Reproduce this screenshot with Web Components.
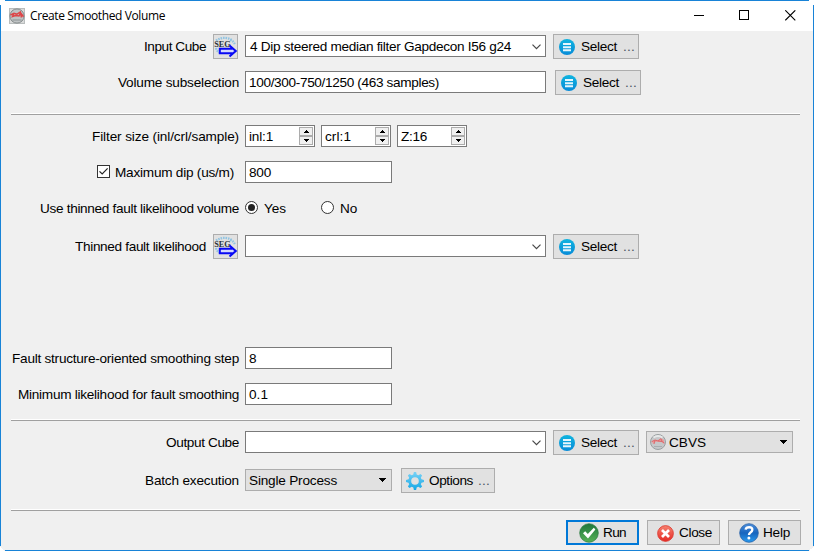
<!DOCTYPE html>
<html lang="en"><head><meta charset="utf-8"><title>Create Smoothed Volume</title>
<style>
html,body{margin:0;background:#fff}
body{width:814px;height:551px;overflow:hidden;font:13.6px/25px "Liberation Sans",Arial,sans-serif;color:#000}
</style></head><body>
<dialog-window></dialog-window>
<script>
const define=(name,html,setup)=>customElements.define(name,class extends HTMLElement{
  connectedCallback(){
    if(this.shadowRoot)return;
    const t=document.createElement('template');
    t.innerHTML=typeof html==='function'?html(this):html;
    this.attachShadow({mode:'open'}).append(t.content.cloneNode(true));
    if(setup)setup(this);
  }
});
/* Text tracked evenly to the width given in w. */
const ctx=document.createElement('canvas').getContext('2d');
define('fit-text','<style>:host{display:block;white-space:pre;flex:none}:host([dots]){color:#4a5560}</style><slot></slot>',el=>{
  const s=getComputedStyle(el),txt=el.textContent,w=+el.getAttribute('w');
  ctx.font=s.fontSize+' '+s.fontFamily;
  if(w){el.style.width=w+'px';el.style.letterSpacing=((w-ctx.measureText(txt).width)/txt.length).toFixed(3)+'px';}
});
const glyphs={
list:`<svg width="16" height="16" viewBox="0 0 16 16"><defs><linearGradient id="g" x2="0" y2="1"><stop stop-color="#10b4df"/><stop offset="1" stop-color="#078bd8"/></linearGradient></defs><circle cx="8" cy="8" r="8" fill="url(#g)"/><path d="M4 4h8v2H4zM4 7.2h8v2H4zM4 10.3h8v2H4z" fill="#e5f6fd"/></svg>`,
seg:`<svg width="25" height="25" viewBox="0 0 25 25"><g fill="none" stroke="#8fc4e2" stroke-width="2.2" stroke-dasharray="1.6 .9"><path d="M3 6.5Q11 1.5 19 6"/><path d="M3 14Q4 18 7 18.5M17 6Q21 7 22 11"/></g><text x="1.2" y="13" font-family="Liberation Serif,serif" font-size="9" font-weight="bold" fill="#2c3238" textLength="16.5" lengthAdjust="spacingAndGlyphs">SEG</text><path d="M6.8 14.8H16.5V11.2L23 17L16.5 22.8V19.2H6.8Z" fill="#d4d8ff"/><path d="M16.5 11.4L22.8 17L16.5 22.6M19.5 14.8H6.8V19.2H19.5" fill="none" stroke="#0808f5" stroke-width="2"/></svg>`,
gear:`<svg width="18" height="18" viewBox="0 0 18 18"><defs><linearGradient id="g" gradientUnits="userSpaceOnUse" x1="0" y1="0" x2="0" y2="18"><stop stop-color="#7ad2f6"/><stop offset="1" stop-color="#12a7e6"/></linearGradient></defs><path fill="url(#g)" fill-rule="evenodd" d="M7.9 0h2.2l.6 2.5 1.6.7 2.2-1.3 1.6 1.6-1.3 2.2.7 1.6 2.5.6v2.2l-2.5.6-.7 1.6 1.3 2.2-1.6 1.6-2.2-1.3-1.6.7-.6 2.5H7.9l-.6-2.5-1.6-.7-2.2 1.3-1.6-1.6 1.3-2.2-.7-1.6L0 10.1V7.9l2.5-.6.7-1.6-1.3-2.2 1.6-1.6 2.2 1.3 1.6-.7zM9 5.2a3.8 3.8 0 1 0 0 7.6a3.8 3.8 0 0 0 0-7.6z"/></svg>`,
ok:`<svg width="20" height="20" viewBox="0 0 20 20"><defs><linearGradient id="g" x2="0" y2="1"><stop stop-color="#1e763b"/><stop offset="1" stop-color="#58b257"/></linearGradient></defs><circle cx="10" cy="10" r="9.3" fill="url(#g)" stroke="#2c7b43" stroke-width=".7"/><path d="M4 10.2L6.2 8.3L8.8 11L14.8 4.7L16.4 6.5L9 15.4Z" fill="#fff"/></svg>`,
no:`<svg width="17" height="17" viewBox="0 0 17 17"><defs><linearGradient id="g" x2="0" y2="1"><stop stop-color="#f6816f"/><stop offset="1" stop-color="#e52b25"/></linearGradient></defs><circle cx="8.5" cy="8.5" r="7.9" fill="url(#g)" stroke="#da3b32" stroke-width=".8"/><path d="M5 5L12 12M12 5L5 12" stroke="#fff" stroke-width="2.7"/></svg>`,
help:`<svg width="20" height="20" viewBox="0 0 20 20"><defs><linearGradient id="g" x2="0" y2="1"><stop stop-color="#4c8edc"/><stop offset=".5" stop-color="#1765be"/><stop offset="1" stop-color="#2a9cf0"/></linearGradient></defs><circle cx="10" cy="10" r="9.3" fill="url(#g)" stroke="#2a62a7" stroke-width=".8"/><path d="M6.6 6.6Q7 4.2 10.2 4.2Q13.5 4.2 13.3 7Q13.2 8.4 11.2 9.7Q10 10.5 10 12" fill="none" stroke="#fff" stroke-width="2.4"/><circle cx="9.9" cy="15" r="1.5" fill="#fff"/></svg>`,
cube:`<svg width="16" height="16" viewBox="0 0 16 16"><circle cx="8" cy="8" r="7.5" fill="#c5c8ca" stroke="#9a9fa1"/><path d="M3.5 3.5Q8 .5 12.5 3.5" stroke="#e7e9e9" stroke-width="2" fill="none"/><path d="M2 7Q5 5 8 6Q11 3 14 6V10Q11 7 9 8Q5 7 3 10Z" fill="#e89c9c"/><path d="M1.5 7.8L5 6L8 7L11 4.6L12 7.5L14.5 9M5 6L4 10M8 7L12 7.5" stroke="#dc6b6e" stroke-width="1" fill="none"/><path d="M4 12.5h8" stroke="#a9aeb0"/></svg>`,
app:`<svg width="16" height="16" viewBox="0 0 16 16"><rect x=".5" y=".5" width="15" height="15" fill="#d9dada" stroke="#b9bdbd"/><circle cx="8" cy="8" r="7.1" fill="#bfc3c4" stroke="#858b8c"/><path d="M1.5 7L5 5.2L8 6.2L11 4.2L12.5 6L14.5 8.8M5 5.2L3.5 8.5L6.5 7.6L10 8L11.5 5L12.5 9.5" stroke="#dd4548" stroke-width="1.5" fill="none"/><path d="M3.5 12h9" stroke="#8d9395"/></svg>`,
chev:`<svg width="9" height="6" viewBox="0 0 9 6"><path d="M.5 .7L4.5 4.7L8.5 .7" fill="none" stroke="#484848" stroke-width="1.2"/></svg>`,
down:`<svg width="8" height="4" viewBox="0 0 8 4" shape-rendering="crispEdges"><path d="M0 0h7v1H0zM1 1h5v1H1zM2 2h3v1H2zM3 3h1v1H3z"/></svg>`
};
define('ui-icon',el=>`<style>:host{display:block;flex:none}svg{display:block}</style>${glyphs[el.getAttribute('name')]}`);
define('push-button',el=>`<style>:host{display:flex;flex:none;box-sizing:border-box;height:25px;width:${el.getAttribute('width')}px;border:1px solid #adadad;background:#e1e1e1;align-items:center;line-height:23px;padding-left:${el.getAttribute('pad')||5}px;gap:${el.getAttribute('gap')||6}px}:host([default]){border:2px solid #0078d7;line-height:21px}ui-icon{margin-top:1px}</style><ui-icon name="${el.getAttribute('icon')}"></ui-icon><slot></slot>`);
define('seg-button',`<style>:host{display:block;flex:none;box-sizing:border-box;width:25px;height:25px;border:1px solid #adadad;background:#e1e1e1;margin-left:7px;margin-right:1px}ui-icon{margin:-1px}</style><ui-icon name="seg"></ui-icon>`);
define('text-box',el=>`<style>:host{display:flex;flex:none;box-sizing:border-box;width:${el.getAttribute('width')||147}px;height:22px;margin-top:1px;border:1px solid #7a7a7a;background:#fff;padding:0 4px 0 3px;line-height:21px;align-items:center}:host([combo]){padding-left:4px}ui-icon{margin-left:auto;margin-top:1px}</style><slot></slot>${el.hasAttribute('combo')?'<ui-icon name="chev"></ui-icon>':''}`);
define('drop-list',`<style>:host{display:flex;flex:none;box-sizing:border-box;width:147px;height:22px;margin-top:1px;border:1px solid #adadad;background:#e1e1e1;line-height:20px;align-items:center;padding:0 4px 0 3px;gap:3px}.a{margin-left:auto}::slotted(fit-text){margin-top:2px}</style><slot></slot><ui-icon class="a" name="down"></ui-icon>`);
define('spin-box',`<style>:host{display:flex;flex:none;box-sizing:border-box;width:70px;height:22px;margin:1px 6px 0 0;border:1px solid #7a7a7a;background:#fff;padding:1px 1px 1px 3px;line-height:19px}.s{margin-left:auto;display:grid;grid-template-rows:9px 9px;width:14px}.s i{box-sizing:border-box;border:1px solid #acacac;background:#f0f0f0;display:grid;place-items:center}svg{display:block}</style><slot></slot><div class="s"><i><svg width="5" height="3" shape-rendering="crispEdges"><path d="M2 0h1v1H2zM1 1h3v1H1zM0 2h5v1H0z"/></svg></i><i><svg width="5" height="3" shape-rendering="crispEdges"><path d="M0 0h5v1H0zM1 1h3v1H1zM2 2h1v1H2z"/></svg></i></div>`);
define('radio-option',el=>`<style>:host{display:flex;flex:none;width:76px;gap:6px}svg{display:block;margin-top:5px}</style><svg width="13" height="13"><circle cx="6.5" cy="6.5" r="6" fill="#fff" stroke="#333"/>${el.hasAttribute('checked')?'<circle cx="6.5" cy="6.5" r="3.5" fill="#222"/>':''}</svg><slot></slot>`);
define('check-mark',`<style>:host{display:block;margin:5px 5px 0 0}svg{display:block}</style><svg width="13" height="13"><rect x=".5" y=".5" width="12" height="12" fill="#fff" stroke="#333"/><path d="M2.5 6.3L5.2 9L10.6 3.4" fill="none" stroke="#222" stroke-width="1.2"/></svg>`);
define('form-row',`<style>:host{display:grid;grid-template-columns:228px 1fr;column-gap:6px;height:25px}.l,.f{display:flex;align-items:flex-start}.l{justify-content:flex-end}</style><div class="l"><slot name="label"></slot></div><div class="f"><slot></slot></div>`);
define('rule-line',`<style>:host{display:block;height:1px;border-top:1px solid #fff;background:#a0a0a0;width:789px}</style>`);
define('title-bar',`<style>:host{display:flex;height:30px;background:#fff;align-items:center;padding:0 17px 0 8px;font:12px/30px "Open Sans","Noto Sans",sans-serif}fit-text{margin-left:5px}.w{margin-left:auto;display:flex;gap:35px}.w svg:last-child{margin-left:1px}svg{display:block;margin-top:-1px}</style>
<ui-icon name="app"></ui-icon><fit-text w="135">Create Smoothed Volume</fit-text><div class="w"><svg width="10" height="11"><path d="M0 5.5h10" stroke="#000"/></svg><svg width="10" height="11"><rect x=".5" y=".5" width="9" height="9" fill="none" stroke="#000"/></svg><svg width="11" height="11"><path d="M.3 .3L10.3 10.3M10.3 .3L.3 10.3" stroke="#000" stroke-width="1.1"/></svg></div>`);
define('dialog-window',()=>{
const L=(t,w,x='')=>`<fit-text slot="label" w="${w}" ${x}>${t}</fit-text>`,T=(t,w)=>`<fit-text w="${w}">${t}</fit-text>`;
const dots='<fit-text dots w="12">...</fit-text>';
const seg='<seg-button slot="label"></seg-button>',sel=(m=7)=>`<push-button icon="list" width="86" style="margin-left:${m}px">${T('Select',36)}${dots}</push-button>`;
return `<style>
:host{display:flex;flex-direction:column;box-sizing:border-box;position:relative;width:814px;height:551px;border:1px solid #1883d7;background:#f0f0f0}
.form{padding:3px 0 0 10px;display:flex;flex-direction:column}
.foot{display:flex;gap:8px;justify-content:flex-end;padding:9px 12px 0 0}
.corner{position:absolute;width:5px;height:5px;background:#fff}
.tl{left:-1px;top:-1px}.tr{right:-1px;top:-1px}.bl{left:-1px;bottom:-1px;background:linear-gradient(45deg,#fff 50%,#f0f0f0 50%)}.br{right:-1px;bottom:-1px;background:linear-gradient(-45deg,#fff 50%,#f0f0f0 50%)}
</style><title-bar></title-bar><div class="form">
<form-row>${L('Input Cube',62)}${seg}<text-box combo width="301">${T('4 Dip steered median filter Gapdecon I56 g24',261)}</text-box>${sel()}</form-row>
<form-row style="margin-top:11px">${L('Volume subselection',121)}<text-box width="301">${T('100/300-750/1250 (463 samples)',190)}</text-box>${sel(9)}</form-row>
<rule-line style="margin-top:18px"></rule-line>
<form-row style="margin-top:9px">${L('Filter size (inl/crl/sample)',147)}<spin-box>${T('inl:1',24)}</spin-box><spin-box>${T('crl:1',26)}</spin-box><spin-box>${T('Z:16',26)}</spin-box></form-row>
<form-row style="margin-top:11px"><check-mark slot="label"></check-mark>${L('Maximum dip (us/m)',119,'style="margin-right:5px"')}<text-box>${T('800',22)}</text-box></form-row>
<form-row style="margin-top:11px">${L('Use thinned fault likelihood volume',199)}<radio-option checked>${T('Yes',22)}</radio-option><radio-option>${T('No',17)}</radio-option></form-row>
<form-row style="margin-top:13px">${L('Thinned fault likelihood',131)}${seg}<text-box combo width="301"></text-box>${sel()}</form-row>
<form-row style="margin-top:87px">${L('Fault structure-oriented smoothing step',227)}<text-box>${T('8',7.5)}</text-box></form-row>
<form-row style="margin-top:11px">${L('Minimum likelihood for fault smoothing',221)}<text-box>${T('0.1',19)}</text-box></form-row>
<rule-line style="margin-top:12px"></rule-line>
<form-row style="margin-top:9px">${L('Output Cube',73)}<text-box combo width="301"></text-box>${sel()}<drop-list style="margin-left:7px"><ui-icon name="cube"></ui-icon>${T('CBVS',37)}</drop-list></form-row>
<form-row style="margin-top:13px">${L('Batch execution',94)}<drop-list>${T('Single Process',88)}</drop-list><push-button icon="gear" width="94" pad="4" gap="5" style="margin-left:9px">${T('Options',44)}${dots}</push-button></form-row>
<rule-line style="margin-top:16px"></rule-line>
<div class="foot"><push-button default icon="ok" width="73" pad="11" gap="4">${T('Run',23)}</push-button><push-button icon="no" width="73" pad="9" gap="5">${T('Close',33)}</push-button><push-button icon="help" width="73" pad="10" gap="4">${T('Help',27)}</push-button></div>
</div><i class="corner tl"></i><i class="corner tr"></i><i class="corner bl"></i><i class="corner br"></i>`});
</script></body></html>
